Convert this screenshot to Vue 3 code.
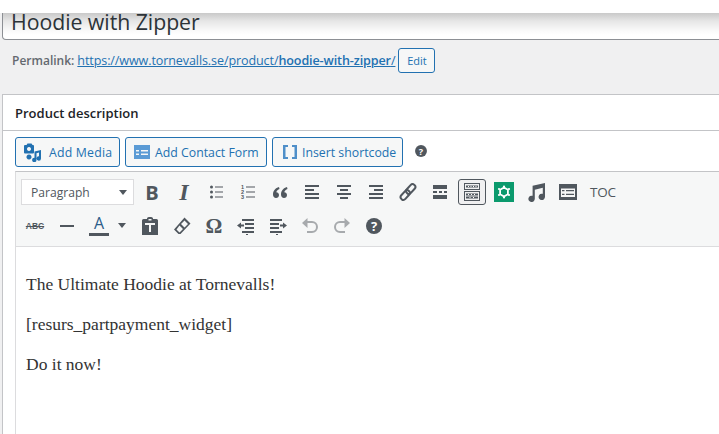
<script setup>
const content = ['The Ultimate Hoodie at Tornevalls!', '[resurs_partpayment_widget]', 'Do it now!']
</script>

<template>
  <div class="page">
    <div class="topbar"></div>
    <div class="title">Hoodie with Zipper</div>
    <div class="permalink">
      <strong>Permalink:</strong>
      <a class="url">https://www.tornevalls.se/product/<b>hoodie-with-zipper</b>/</a>
      <button class="edit">Edit</button>
    </div>
    <section class="postbox">
      <h2>Product description</h2>
      <div class="body">
        <div class="media">
          <button class="btn btn-media">
            <svg width="20" height="20" viewBox="0 0 20 20" class="blue"><path fill-rule="evenodd" d="M2 4a1 1 0 0 1 1-1h1.500l1-1.500h4L10.500 3H11a1 1 0 0 1 1 1v6.500a1 1 0 0 1-1 1H3a1 1 0 0 1-1-1zM7 5a2 2 0 1 0 .01 0z"/><path d="M19 8v8.500a2.200 2.200 0 1 1-2-2.200V10.500l-2.500.7V18a2.200 2.200 0 1 1-2-2.200V9.500zM7 12.500a2.500 2.500 0 1 1-.01 0z"/></svg>
            Add Media
          </button>
          <button class="btn btn-form">
            <svg width="20" height="20" viewBox="0 0 20 20"><path fill="#5b9bd5" fill-rule="evenodd" d="M2 3h16v14H2zM4 8v1.500h3V8zM9 8v1.500h7V8zM4 11.500V13h3v-1.500zM9 11.500V13h7v-1.500z"/></svg>
            Add Contact Form
          </button>
          <button class="btn btn-short">
            <svg width="20" height="20" viewBox="0 0 20 20"><path fill="#4f8fc9" d="M3 3h5v2H5.500v10H8v2H3zM17 3h-5v2h2.500v10H12v2h5z"/></svg>
            Insert shortcode
          </button>
          <svg class="media-help" width="14" height="14" viewBox="0 0 20 20"><circle cx="10" cy="10" r="8.500" fill="#50575e"/><text x="10" y="15" text-anchor="middle" class="qmark">?</text></svg>
        </div>

        <div class="editor">
          <div class="toolbar">
            <div class="row">
              <div class="select">Paragraph<span class="caret"></span></div>
              <span class="cell letter bold">B</span>
              <span class="cell letter ital">I</span>
              <span class="cell"><svg width="20" height="20" viewBox="0 0 20 20"><circle cx="5.500" cy="5" r="1.500"/><circle cx="5.500" cy="10" r="1.500"/><circle cx="5.500" cy="15" r="1.500"/><path d="M9 4.500h8v1H9zM9 9.500h8v1H9zM9 14.500h8v1H9z"/></svg></span>
              <span class="cell"><svg width="20" height="20" viewBox="0 0 20 20"><text x="3" y="7" class="tiny">1</text><text x="3" y="12" class="tiny">2</text><text x="3" y="17" class="tiny">3</text><path d="M8 4.500h9v1H8zM8 9.500h9v1H8zM8 14.500h9v1H8z"/></svg></span>
              <span class="cell"><svg width="20" height="20" viewBox="0 0 20 20"><path d="M9 5C5.500 6 3 8.500 3 12.500 3 14.500 4.300 16 6 16s3-1.300 3-3-1.200-2.800-2.700-2.800C6.800 8.500 8 7.500 9.500 7zM17 5c-3.500 1-6 3.500-6 7.500 0 2 1.300 3.500 3 3.500s3-1.300 3-3-1.200-2.800-2.700-2.800c.5-1.700 1.700-2.700 3.200-3.200z"/></svg></span>
              <span class="cell"><svg width="20" height="20" viewBox="0 0 20 20"><path d="M3 3h14v2H3zM3 7h9v2H3zM3 11h14v2H3zM3 15h14v2H3z"/></svg></span>
              <span class="cell"><svg width="20" height="20" viewBox="0 0 20 20"><path d="M3 3h14v2H3zM6 7h8v2H6zM3 11h14v2H3zM6 15h8v2H6z"/></svg></span>
              <span class="cell"><svg width="20" height="20" viewBox="0 0 20 20"><path d="M3 3h14v2H3zM8 7h9v2H8zM3 11h14v2H3zM3 15h14v2H3z"/></svg></span>
              <span class="cell"><svg width="20" height="20" viewBox="0 0 20 20"><g fill="none" stroke="#50575e" stroke-width="2"><rect x="10" y="1.500" width="5.500" height="11" rx="2.700" transform="rotate(42 12.700 7)"/><rect x="4.500" y="7.500" width="5.500" height="11" rx="2.700" transform="rotate(42 7.200 13)"/></g></svg></span>
              <span class="cell"><svg width="20" height="20" viewBox="0 0 20 20"><path d="M3 3h14v4H3zM3 13h14v4H3zM3 9h4v2H3zM9 9h3v2H9zM14 9h3v2h-3z"/></svg></span>
              <span class="cell"><span class="active"><svg width="20" height="20" viewBox="0 0 20 20"><path fill-rule="evenodd" d="M2 1h16v7H2zM3 2v5h14V2zM2 9h16v10H2zM3 10v8h14v-8z"/><path d="M4 3.500h12v2H4zM4 11.500h12v2H4zM4 14.500h12v2H4z"/><path fill="#fff" d="M6 4h1v1H6zM8.500 4h1v1h-1zM11 4h1v1h-1zM13.500 4h1v1h-1zM6 12h1v1H6zM9 12h1v1H9zM12 12h1v1h-1zM7.500 15h1v1h-1zM11 15h1v1h-1z"/></svg></span></span>
              <span class="cell"><svg width="20" height="20" viewBox="0 0 20 20"><rect width="20" height="20" fill="#0b9a6d"/><path fill="none" stroke="#fff" stroke-width="1.800" d="M10 5.500l3.900 2.200v4.600L10 14.500l-3.900-2.200V7.700z"/><g fill="#fff"><circle cx="10" cy="4.500" r="1.100"/><circle cx="10" cy="15.500" r="1.100"/><circle cx="5" cy="7" r="1.100"/><circle cx="15" cy="7" r="1.100"/><circle cx="5" cy="13" r="1.100"/><circle cx="15" cy="13" r="1.100"/></g></svg></span>
              <span class="cell"><svg width="20" height="20" viewBox="0 0 20 20"><path d="M19 1v13.800a3.200 3.200 0 1 1-2.200-3V5.700l-8 2v9.100a3.200 3.200 0 1 1-2.200-3V3.800z"/></svg></span>
              <span class="cell"><svg width="20" height="20" viewBox="0 0 20 20"><path fill-rule="evenodd" d="M1 2h18v16H1zM3 6.500V15h14V6.500zM4 8h2.500v1.300H4zM8 8h8v1.300H8zM4 11.700h2.500V13H4zM8 11.700h8V13H8z"/></svg></span>
              <span class="cell toc">TOC</span>
            </div>
            <div class="row second">
              <span class="cell"><span class="abc">ABC</span></span>
              <span class="cell"><svg width="20" height="20" viewBox="0 0 20 20"><path d="M3 9h14v2H3z"/></svg></span>
              <span class="split">
                <span class="a-letter">A</span>
                <span class="caret small"></span>
              </span>
              <span class="cell"><svg width="20" height="20" viewBox="0 0 20 20"><path fill-rule="evenodd" d="M7 2.500C7 1.500 8 1 10 1s3 .5 3 1.500V3h3.500A1.500 1.500 0 0 1 18 4.500V19H2V4.500A1.500 1.500 0 0 1 3.500 3H7zM8.500 3v1.500h3V3zM5 7v2h4v7h2V9h4V7z"/></svg></span>
              <span class="cell"><svg width="20" height="20" viewBox="0 0 20 20"><path fill-rule="evenodd" d="M12.500 1.500l6 6L8.500 18H6.500L2 13.500zM12.500 4.500L9 8l3.500 3.500L16 8zM7.500 9.500L4.500 13.500 7.500 16.500 11 13z"/></svg></span>
              <span class="cell letter omega">Ω</span>
              <span class="cell"><svg width="20" height="20" viewBox="0 0 20 20"><path d="M6 3h12v2H6zM9 7h9v2H9zM9 11h9v2H9zM6 15h12v2H6zM10 18h2v1h-2zM1 9.500l4-3v2h3v2H5v2z"/></svg></span>
              <span class="cell"><svg width="20" height="20" viewBox="0 0 20 20"><path d="M2 3h12v2H2zM2 7h9v2H2zM2 11h9v2H2zM2 15h12v2H2zM8 18h2v1H8zM19 9.500l-4-3v2h-3v2h3v2z"/></svg></span>
              <span class="cell"><svg width="20" height="20" viewBox="0 0 20 20"><path class="dim-fill" d="M2 7l5.500-5V5H12a6 6 0 0 1 0 12H7v-2h5a4 4 0 0 0 0-8H7.500v5z"/></svg></span>
              <span class="cell"><svg width="20" height="20" viewBox="0 0 20 20"><path class="dim-fill" d="M18 7l-5.500-5V5H8a6 6 0 0 0 0 12h5v-2H8a4 4 0 0 1 0-8h4.500v5z"/></svg></span>
              <span class="cell"><svg width="20" height="20" viewBox="0 0 20 20"><circle cx="10" cy="10" r="8" fill="#50575e"/><text x="10" y="15" text-anchor="middle" class="qmark">?</text></svg></span>
            </div>
          </div>
          <div class="content">
            <p v-for="line in content" :key="line">{{ line }}</p>
          </div>
        </div>
      </div>
    </section>
  </div>
</template>

<style>
html, body { margin: 0; background: #f0f0f1; overflow: hidden; }
</style>

<style scoped>
.page {
  width: 719px; height: 434px; overflow: hidden; position: relative;
  background: #f0f0f1; font-family: "Open Sans", sans-serif; color: #3c434a;
}
.topbar { height: 13px; background: #fff; position: relative; z-index: 2; }
.title {
  height: 26px; margin: 0 -10px 0 2px; box-sizing: content-box;
  border: 1px solid #8c8f94; border-top: 0; border-radius: 0 0 4px 4px;
  background: linear-gradient(#c9c9c9, #e6e6e6 8px, #fafafa 18px, #fff 22px);
  font-size: 21.300px; line-height: 17px; padding-left: 8px; color: #2c3338;
  letter-spacing: -0.050px; white-space: nowrap;
}
.permalink {
  display: flex; align-items: center; height: 25px; margin-top: 8px; padding-left: 12px;
  font-size: 12px; color: #646970; white-space: nowrap;
}
.permalink strong { font-weight: 600; }
.url { color: #2271b1; text-decoration: underline; margin-left: 3px; font-size: 12.550px; letter-spacing: -.1px; }
.url b { font-weight: 600; }
.edit {
  margin-left: 3px; width: 37px; height: 25px; padding: 0; box-sizing: border-box;
  border: 1px solid #2271b1; border-radius: 3px; background: #f6f7f7; color: #2271b1;
  font: 11px "Open Sans", sans-serif;
}
.postbox {
  margin: 21px -10px 0 2px; background: #fff; border: 1px solid #c3c4c7; border-right: 0;
  height: 400px; box-sizing: border-box;
}
h2 {
  margin: 0; height: 36px; box-sizing: border-box; padding-left: 12px;
  border-bottom: 1px solid #c3c4c7; font-size: 13px; font-weight: 600; color: #1d2327;
  line-height: 37px;
}
.body { padding: 6px 0 0 12px; }
.media { display: flex; align-items: center; gap: 5px; height: 30px; }
.btn {
  display: flex; align-items: center; height: 30px; padding: 0; box-sizing: border-box;
  border: 1px solid #2271b1; border-radius: 3px; background: #f6f7f7; color: #2271b1;
  font: 12.300px "Open Sans", sans-serif; white-space: nowrap;
}
.btn svg { flex: none; }
.btn-media { width: 105px; padding-left: 6px; gap: 7px; letter-spacing: .2px; }
.btn-form { width: 142px; padding-left: 6px; gap: 3px; }
.btn-short { width: 131px; padding-left: 7px; gap: 2px; }
.blue { fill: #2271b1; }
.media-help { margin: 0 0 2px 6px; }
.qmark { font: 700 13px "Open Sans", sans-serif; fill: #fff; }
.editor { margin-top: 4px; border: 1px solid #dcdcde; border-right: 0; border-top-color: #c3c4c7; }
.toolbar { background: #f6f7f7; border-bottom: 1px solid #dcdcde; padding: 7px 0 0 3px; height: 67px; }
.row { display: flex; align-items: center; height: 26px; }
.row.second { margin-top: 8px; }
.select {
  position: relative; width: 113px; height: 26px; margin: 0 2px; box-sizing: border-box;
  background: #fff; border: 1px solid #dcdcde; padding-left: 9px; font-size: 12.100px; line-height: 25px; color: #50575e;
}
.caret {
  position: absolute; right: 6px; top: 10px; width: 0; height: 0;
  border-left: 4px solid transparent; border-right: 4px solid transparent; border-top: 5px solid #50575e;
}
.caret.small { left: 35px; right: auto; top: 10px; }
.cell { width: 32px; height: 26px; display: flex; align-items: center; justify-content: center; flex: none; }
svg { fill: #50575e; display: block; }
.letter { color: #50575e; line-height: 1; }
.bold { font: 700 20px "Open Sans", sans-serif; }
.ital { font: italic 700 24px "Liberation Serif", serif; }
.tiny { font: 700 5.500px "Liberation Sans", sans-serif; fill: #50575e; }
.active {
  width: 28px; height: 26px; box-sizing: border-box; border: 1px solid #50575e; border-radius: 3px;
  background: #f0f0f1; display: flex; align-items: center; justify-content: center;
}
.toc { font-size: 13.500px; color: #50575e; margin-left: 3px; letter-spacing: -.2px; }
.abc { font: 700 8.500px "Liberation Sans", sans-serif; color: #50575e; text-decoration: line-through; }
.split { position: relative; width: 51px; height: 26px; flex: none; display: flex; justify-content: flex-start; }
.a-letter {
  margin-left: 6px; width: 20px; height: 22px; margin-top: 1px; box-sizing: border-box; text-align: center;
  border-bottom: 3px solid #50575e; font-size: 16px; line-height: 19px; color: #2c5d8a;
}
.omega { font: 700 21px "Liberation Serif", serif; }
.dim-fill { fill: #a7aaad; }
.content {
  padding: 25px 0 0 10px; height: 190px; background: #fff;
  font: 17.500px/24px "Liberation Serif", serif; color: #333;
}
.content p { margin: 0 0 16px; white-space: nowrap; }
</style>
